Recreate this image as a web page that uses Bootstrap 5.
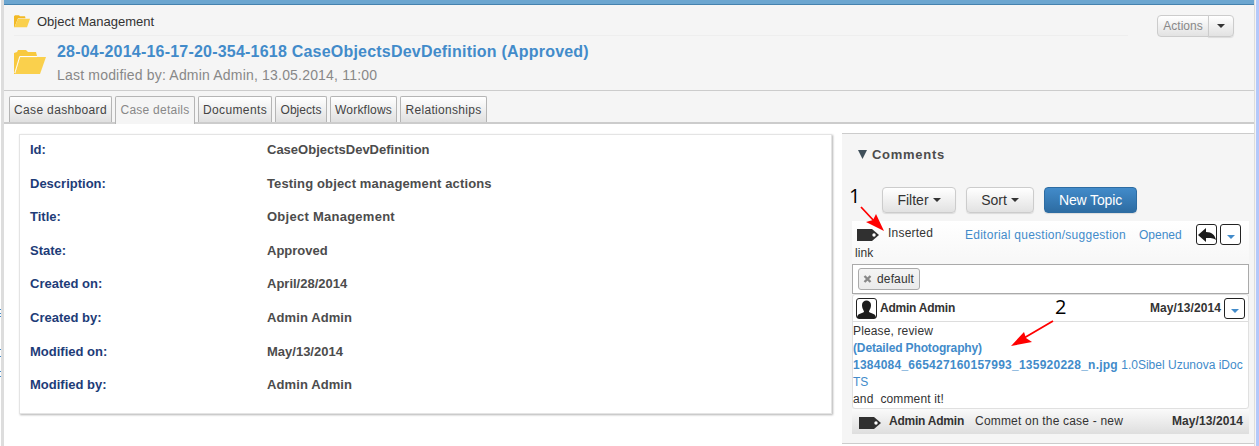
<!DOCTYPE html>
<html lang="en">
<head>
<meta charset="utf-8">
<title>Object Management</title>
<link href="https://cdn.jsdelivr.net/npm/bootstrap@5.3.0/dist/css/bootstrap.min.css" rel="stylesheet">
<style>
body{font-family:"Liberation Sans",Arial,sans-serif;font-size:12px;line-height:17px;color:#333;height:446px;overflow:hidden;background:#fff}
a{color:#428bca;text-decoration:none}
.rail-edge{width:4px;background:linear-gradient(90deg,#fff 1px,#ddd 1px);padding-top:304px}
.rail-edge i{display:block;width:1px;height:1px;background:#428bca}
.edge-r{width:5px;background:linear-gradient(90deg,#ddd 1px,#f4f4f4 1px,#f4f4f4 2px,#b4c8fa 2px)}
.topbar{height:5px;background:#6ca6d0;border-bottom:1px solid #4582ae}
.case-head{height:86px;background:#f5f5f5;border-bottom:1px solid #ccc;padding:0 20px 0 10px}
.crumb{height:31px;width:1114px;border-bottom:1px solid #eee;font-size:13px;color:#333;gap:7px;padding-top:3px}
.case-name{font-size:16px;line-height:20px;letter-spacing:.21px;font-weight:700;margin-top:6px}
.case-mod{font-size:14px;line-height:18px;letter-spacing:.19px;color:#888;margin-top:4px}
.btn-x{--bs-btn-padding-y:0;--bs-btn-padding-x:0;--bs-btn-font-size:14px;line-height:23px;height:26px;border:1px solid #ccc;border-radius:4px;background:linear-gradient(#fff,#e2e2e2);color:#333;box-shadow:0 1px 1px rgba(0,0,0,.1);display:inline-flex;align-items:center;justify-content:center}
.btn-blue{background:linear-gradient(#428bca,#2d6ca2);border-color:#2d6ca2;color:#fff}
.act{--bs-btn-font-size:12px;height:22px;margin-top:10px}
.arrow-d{width:0;height:0;border:4px solid transparent;border-top-color:currentColor;border-bottom:0;display:inline-block}
.tabs{height:33px;background:#f5f5f5;border-bottom:2px solid #ccc;padding:5px 0 0 5px;gap:3px}
.tab{height:26px;border:1px solid #b5b5b5;border-bottom:0;border-radius:2px 2px 0 0;background:linear-gradient(#fff,#e0e0e0);color:#444;text-align:center;line-height:27px;white-space:nowrap}
.tab.on{height:28px;background:#f5f5f5;color:#888}
.details{width:813px;height:280px;margin:10px 0 0 15px;border:1px solid #e4e4e4;box-shadow:1px 1px 2px rgba(0,0,0,.3);padding:5px 0 0 10px;font-size:13px;font-weight:700}
.details .line{height:33.6px;line-height:19px}
.lab{width:237px;color:#1d3c78;letter-spacing:0}
.val{color:#4c4c4c}
.side{width:412px;height:311px;margin:9px 0 0 10px;background:#f5f5f5;border:solid #ccc;border-width:1px 0;padding:0 5px 0 10px}
.side-h{height:53px;padding:12px 0 0 6px;font-size:13px;line-height:18px;font-weight:700;letter-spacing:.73px;color:#4c4c4c;gap:5px}
.tools{padding-left:30px;gap:10px;height:34px}
.topic{height:43px;background:linear-gradient(#fff,#f7f7f7)}
.box{width:21px;height:21px;border:1px solid #222;border-radius:3px;background:#fff;color:#428bca;display:flex;align-items:center;justify-content:center;flex:none}
.box .arrow-d{margin-top:5px}
.tagbox{height:30px;border:1px solid #aaa;background:#fff;padding:3px 5px}
.chip{height:22px;width:62px;border:1px solid #aaa;border-radius:3px;background:linear-gradient(#f4f4f4,#eaeaea);padding-left:4px;gap:5px;letter-spacing:.14px}
.post{height:115px;border:1px solid #e0e0e0;border-radius:3px;background:#fff}
.post-h{height:27px;border-bottom:1px solid #ddd;padding:0 3px;font-weight:700;color:#333}
.post-b{line-height:17px;padding-top:1px;white-space:nowrap}
.last{height:25px;background:linear-gradient(#fafafa,#dedede);padding:0 6px 0 7px}
.notes{left:0;top:0;pointer-events:none}
</style>
</head>
<body>
<div class="d-flex h-100">
  <div class="rail-edge flex-shrink-0"><i style="margin-top:5px"></i><i style="margin-top:3px"></i><i style="margin-top:2px"></i><i style="margin-top:32px"></i><i style="margin-top:6px"></i><i style="margin-top:14px"></i><i style="margin-top:4px"></i></div>
  <main class="flex-grow-1">
    <div class="topbar"></div>
    <header class="case-head d-flex justify-content-between">
      <div>
        <div class="crumb d-flex align-items-center">
          <svg width="16" height="13" viewBox="0 0 32 25"><path fill="#f2b924" d="M0 24V2l2-2h8l2 2h10l1 4H8L1 24z"/><path fill="#fad04c" d="M8 7h24l-6 17H1z"/></svg>
          <span>Object Management</span>
        </div>
        <div class="d-flex">
          <svg width="32" height="25" viewBox="0 0 32 25" style="margin:14px 11px 0 0"><path fill="#f8c93e" d="M0 24V3l3-1 1-2h8l2 2h8l1 4H6L1 24z"/><path fill="#fad04c" d="M6 7h26l-6 17H1z"/><path d="M.8 23 5.7 6.6H23" fill="none" stroke="#fff" stroke-width=".9"/></svg>
          <div><div class="case-name"><a href="#">28-04-2014-16-17-20-354-1618 CaseObjectsDevDefinition (Approved)</a></div><div class="case-mod">Last modified by: Admin Admin, 13.05.2014, 11:00</div></div>
        </div>
      </div>
      <div class="btn-group align-self-start"><button class="btn btn-x act" style="width:52px;color:#888;box-shadow:none">Actions</button><button class="btn btn-x act" style="width:26px" aria-label="Menu"><span class="arrow-d"></span></button></div>
    </header>
    <nav class="tabs d-flex">
      <a class="tab" style="width:103px;letter-spacing:.35px">Case dashboard</a><a class="tab on" style="width:80px;letter-spacing:.25px">Case details</a><a class="tab" style="width:74px;letter-spacing:.37px">Documents</a><a class="tab" style="width:52px;letter-spacing:.04px">Objects</a><a class="tab" style="width:67px;letter-spacing:.21px">Workflows</a><a class="tab" style="width:87px;letter-spacing:.3px">Relationships</a>
    </nav>
    <div class="d-flex">
      <section class="details flex-shrink-0">
        <div class="line d-flex"><div class="lab">Id:</div><div class="val">CaseObjectsDevDefinition</div></div>
        <div class="line d-flex"><div class="lab">Description:</div><div class="val" style="letter-spacing:.14px">Testing object management actions</div></div>
        <div class="line d-flex"><div class="lab">Title:</div><div class="val" style="letter-spacing:.26px">Object Management</div></div>
        <div class="line d-flex"><div class="lab">State:</div><div class="val">Approved</div></div>
        <div class="line d-flex"><div class="lab">Created on:</div><div class="val">April/28/2014</div></div>
        <div class="line d-flex"><div class="lab">Created by:</div><div class="val" style="letter-spacing:.1px">Admin Admin</div></div>
        <div class="line d-flex"><div class="lab">Modified on:</div><div class="val">May/13/2014</div></div>
        <div class="line d-flex"><div class="lab">Modified by:</div><div class="val" style="letter-spacing:.1px">Admin Admin</div></div>
      </section>
      <aside class="side flex-shrink-0">
        <div class="side-h d-flex"><svg width="9" height="9" style="margin-top:4px"><path d="M0 0h9L4.500 9z" fill="#3f4f5a"/></svg><span>Comments</span></div>
        <div class="tools d-flex">
          <button class="btn btn-x" style="width:74px;gap:4px">Filter<span class="arrow-d"></span></button>
          <button class="btn btn-x" style="width:68px;gap:4px">Sort<span class="arrow-d"></span></button>
          <button class="btn btn-x btn-blue" style="width:93px;letter-spacing:-.15px">New Topic</button>
        </div>
        <div class="topic d-flex">
          <div style="width:113px;padding:4px 0 0 3px"><div class="d-flex" style="height:20px"><svg width="24" height="14" style="margin:3px 7px 0 2px"><path d="M0 1h15l7 6-7 6H0z" fill="#303030"/><circle cx="17" cy="7" r="1.700" fill="#fff"/></svg><span style="letter-spacing:.21px">Inserted</span></div><div style="letter-spacing:.1px">link</div></div>
          <a href="#" style="margin-top:6px;width:174px;letter-spacing:.26px">Editorial question/suggestion</a><a href="#" style="margin-top:6px;width:57px">Opened</a>
          <div class="d-flex" style="gap:3px;margin-top:3px"><div class="box"><svg width="18" height="14"><path d="M0 7 8 0v4c6 0 9 3 10 8-3-2-5-2-10-2v4z" fill="#1c1c1c"/></svg></div><div class="box"><span class="arrow-d"></span></div></div>
        </div>
        <div class="tagbox"><div class="chip d-flex align-items-center"><svg width="9" height="8"><path d="m1.500 1 6 6m0-6-6 6" stroke="#888" stroke-width="2.400"/></svg><span>default</span></div></div>
        <div class="post">
          <div class="post-h d-flex align-items-center"><div class="box"><svg width="19" height="19"><path d="M0 19c0-4 3-4 7-6 0-2-2-3-2-7 0-6 9-6 9 0 0 4-2 5-2 7 4 2 7 2 7 6z" fill="#1c1c1c"/></svg></div><span style="margin-left:3px;letter-spacing:-.23px">Admin Admin</span><span class="ms-auto" style="margin-right:3px;letter-spacing:.09px">May/13/2014</span><div class="box"><span class="arrow-d"></span></div></div>
          <div class="post-b"><div style="letter-spacing:.14px">Please, review</div><a href="#"><b style="letter-spacing:-.14px">(Detailed Photography)</b><br><b style="letter-spacing:.24px">1384084_665427160157993_135920228_n.jpg</b> 1.0Sibel Uzunova iDoc<br>TS</a><div style="letter-spacing:.14px">and&nbsp; comment it!</div></div>
        </div>
        <div class="last d-flex align-items-center"><svg width="24" height="14" style="margin:2px 6px 0 0"><path d="M0 1h15l7 6-7 6H0z" fill="#303030"/><circle cx="17" cy="7" r="1.700" fill="#fff"/></svg><b style="letter-spacing:-.23px">Admin Admin</b><span style="margin-left:11px;letter-spacing:.19px">Commet on the case - new</span><b class="ms-auto" style="letter-spacing:.09px">May/13/2014</b></div>
      </aside>
    </div>
  </main>
  <div class="edge-r flex-shrink-0"></div>
</div>
<svg class="notes position-absolute" width="1259" height="446" font-family="Open Sans,sans-serif" font-size="20" fill="#000">
  <text x="849" y="203">1</text><text x="1055" y="314">2</text>
  <g stroke="#f00" stroke-width="1.800"><path d="m861 207 14 15M1053 321l-29 17"/></g>
  <path d="m884 231-18-9 7-2 3-6zM1011 346l13-14 2 6 6 4z" fill="#f00"/>
</svg>
<script src="https://cdn.jsdelivr.net/npm/bootstrap@5.3.0/dist/js/bootstrap.bundle.min.js"></script>
</body>
</html>
